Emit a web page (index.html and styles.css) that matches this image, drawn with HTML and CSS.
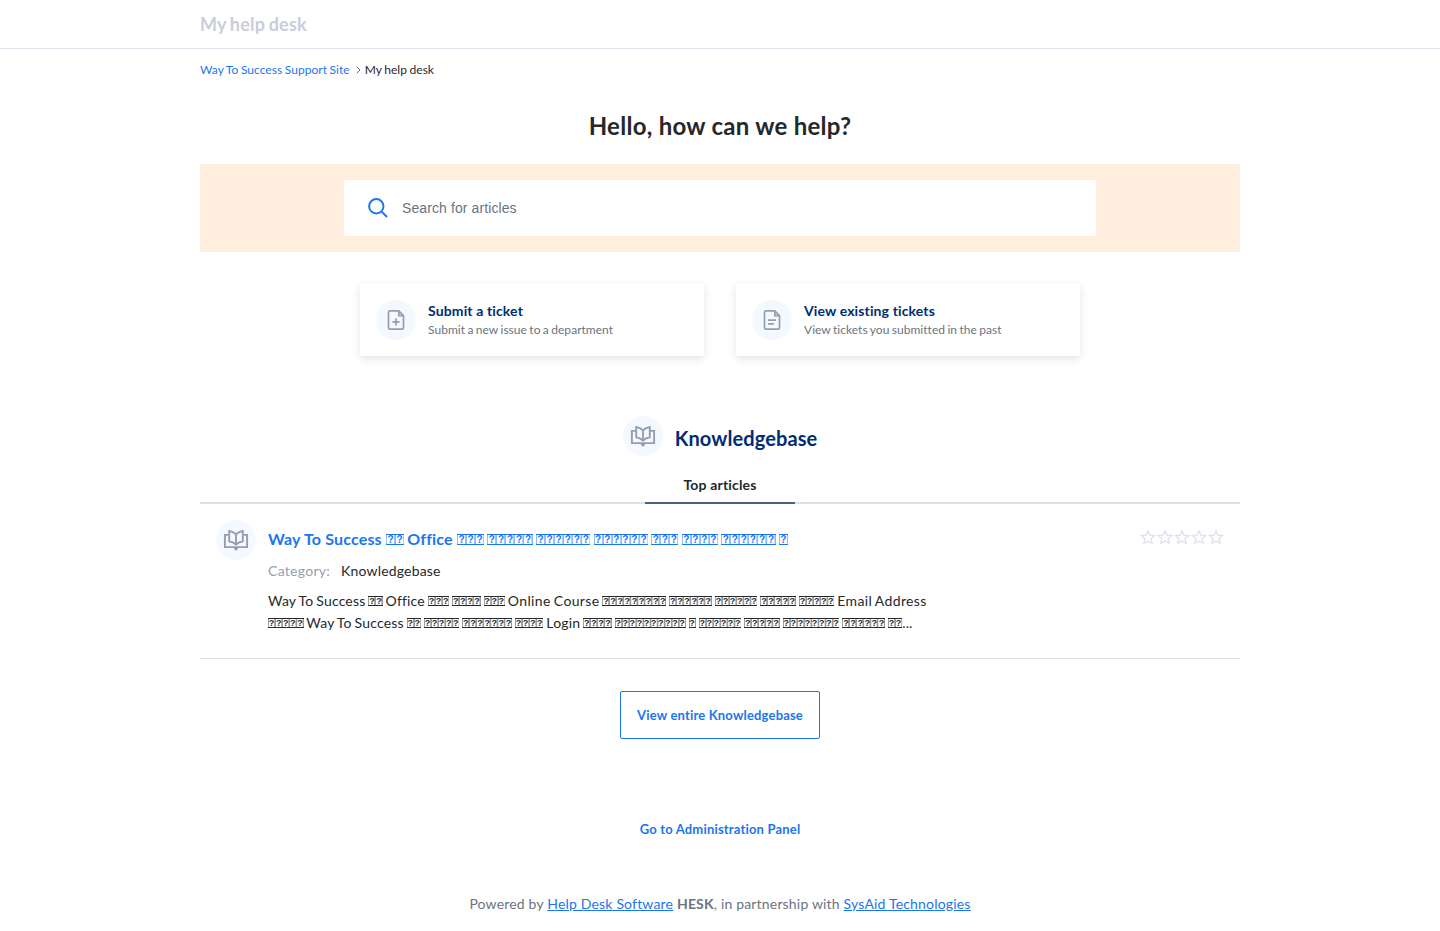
FILE: index.html
```html
<!DOCTYPE html>
<html lang="en">
<head>
<meta charset="utf-8">
<title>My help desk</title>
<link rel="stylesheet" href="styles.css">
</head>
<body>
<svg class="defs" width="0" height="0">
  <symbol id="book" viewBox="0 0 24 24"><path d="M5.200 6.900H.9v12.200h22.200V6.900h-4.300M12 16.500V6.200C10 4.500 7.600 3.400 5.200 3v10.200c2.600.4 4.900 1.500 6.800 3.300 1.900-1.800 4.200-2.900 6.800-3.300V3C16.400 3.400 14 4.500 12 6.200" fill="none" stroke="currentColor" stroke-width="1.900"/><path d="M9.800 19h4.400c0 2-1 3.400-2.200 3.400S9.800 21 9.800 19z" fill="currentColor"/></symbol>
  <symbol id="star" viewBox="0 0 16 16"><path d="M8 1.800l1.900 4.300 4.700.5-3.500 3.100 1 4.600L8 11.900l-4.100 2.400 1-4.600L1.400 6.600l4.700-.5z" fill="none" stroke="currentColor" stroke-width="1.300"/></symbol>
</svg>
<header class="header"><div class="container"><a class="brand">My help desk</a></div></header>
<main class="container">
  <nav class="crumbs"><a>Way To Success Support Site</a><svg width="5" height="8" viewBox="0 0 5 8"><path d="M.7.7 4 4 .7 7.300" fill="none" stroke="#6b7480"/></svg><span>My help desk</span></nav>
  <h1 class="hello">Hello, how can we help?</h1>
  <div class="search"><div class="search-box">
    <svg width="20" height="20" viewBox="0 0 20 20"><path d="M13.600 13.600 19 19M15.500 8.300a7.200 7.200 0 1 1-14.400 0 7.200 7.200 0 0 1 14.400 0z" fill="none" stroke="#1a76f0" stroke-width="2"/></svg>
    <input type="text" placeholder="Search for articles">
  </div></div>
  <div class="cards">
    <a class="card"><span class="disc"><svg width="24" height="24" viewBox="0 0 24 24"><path d="M14.800 2.900H5.700a1.200 1.200 0 0 0-1.200 1.200v15.800a1.200 1.200 0 0 0 1.200 1.200h12.600a1.200 1.200 0 0 0 1.200-1.200V7.700zv4.800h4.700M12 10.200v7.200M8.400 13.800h7.200" fill="none" stroke="currentColor" stroke-width="1.700"/></svg></span>
      <span class="card-text"><b>Submit a ticket</b><span>Submit a new issue to a department</span></span></a>
    <a class="card"><span class="disc"><svg width="24" height="24" viewBox="0 0 24 24"><path d="M14.800 2.900H5.700a1.200 1.200 0 0 0-1.200 1.200v15.800a1.200 1.200 0 0 0 1.200 1.200h12.600a1.200 1.200 0 0 0 1.200-1.200V7.700zv4.800h4.700M8 12.200h8M8 15.800h6" fill="none" stroke="currentColor" stroke-width="1.700"/></svg></span>
      <span class="card-text"><b>View existing tickets</b><span>View tickets you submitted in the past</span></span></a>
  </div>
  <h2 class="kb"><span class="disc"><svg width="26" height="24"><use href="#book"/></svg></span><span class="kb-name">Knowledgebase</span></h2>
  <div class="tabs"><div class="tab">Top articles</div></div>
  <article class="article">
    <span class="disc"><svg width="26" height="24"><use href="#book"/></svg></span>
    <div class="article-main">
      <h3>Way To Success <i style="--n:2">??</i> Office <i style="--n:3">???</i> <i style="--n:5">?????</i> <i style="--n:6">??????</i> <i style="--n:6">??????</i> <i style="--n:3">???</i> <i style="--n:4">????</i> <i style="--n:6">??????</i> <i style="--n:1">?</i></h3>
      <div class="category"><span>Category:</span>Knowledgebase</div>
      <p>Way To Success <i style="--n:2">??</i> Office <i style="--n:3">???</i> <i style="--n:4">????</i> <i style="--n:3">???</i> <span class="wide">Online Course</span> <i style="--n:9">?????????</i> <i style="--n:6">??????</i> <i style="--n:6">??????</i> <i style="--n:5">?????</i> <i style="--n:5">?????</i> <span class="wide">Email Address</span><br><i style="--n:5">?????</i> Way To Success <i style="--n:2">??</i> <i style="--n:5">?????</i> <i style="--n:7">???????</i> <i style="--n:4">????</i> Login <i style="--n:4">????</i> <i style="--n:10">??????????</i> <i style="--n:1">?</i> <i style="--n:6">??????</i> <i style="--n:5">?????</i> <i style="--n:8">????????</i> <i style="--n:6">??????</i> <i style="--n:2">??</i>...</p>
    </div>
    <div class="stars"><svg><use href="#star"/></svg><svg><use href="#star"/></svg><svg><use href="#star"/></svg><svg><use href="#star"/></svg><svg><use href="#star"/></svg></div>
  </article>
  <a class="button">View entire Knowledgebase</a>
  <a class="admin">Go to Administration Panel</a>
</main>
<footer class="footer">Powered by <a>Help Desk Software</a> <b>HESK</b>, in partnership with <a>SysAid Technologies</a></footer>
</body>
</html>
```
FILE: styles.css
```css
* { box-sizing: border-box; }
body { margin: 0; background: #fff; color: #26282a; font: 14px/22px Lato, sans-serif; letter-spacing: .18px; }
h1, h2, h3, p { margin: 0; }
.defs { position: absolute; }
.container { width: 1040px; margin: 0 auto; }
.header { height: 49px; border-bottom: 1px solid #dce1eb; }
.brand { display: block; font-size: 18px; line-height: 49px; font-weight: 700; color: #c9cdd9; letter-spacing: .2px; word-spacing: -1px; }
.crumbs { display: flex; align-items: center; height: 42px; font-size: 12px; letter-spacing: .03px; word-spacing: -.5px; }
.crumbs a { color: #1a76f0; }
.crumbs svg { margin: 0 4px 0 6px; }
.hello { margin-top: 18px; text-align: center; font-size: 24px; line-height: 34px; letter-spacing: .27px; }
.search { margin-top: 21px; height: 88px; padding: 16px 144px; background: #ffeedd; }
.search-box { display: flex; align-items: center; height: 56px; padding-left: 24px; background: #fff; border-radius: 2px; }
.search input { border: 0; outline: 0; width: 600px; margin-left: 14px; padding: 0; font: 14px "Liberation Sans", sans-serif; letter-spacing: .1px; }
.search input::placeholder { color: #6b7480; }
.cards { display: flex; gap: 32px; justify-content: center; margin-top: 32px; }
.card { display: flex; align-items: center; gap: 12px; width: 344px; height: 72px; padding: 16px; box-shadow: 0 3px 8px rgba(38, 40, 42, .12); border-radius: 2px; }
.disc { display: flex; flex: none; align-items: center; justify-content: center; width: 40px; height: 40px; border-radius: 50%; background: #f4f8ff; color: #959eb0; }
.card-text { padding-top: 2px; }
.card-text b { display: block; color: #002d73; line-height: 18px; letter-spacing: .13px; }
.card-text span { display: block; font-size: 12px; line-height: 20px; color: #6b7480; letter-spacing: .03px; word-spacing: -.7px; }
.kb { display: flex; justify-content: center; gap: 12px; margin-top: 60px; font-size: 20px; line-height: 44px; color: #002d73; height: 44px; letter-spacing: .1px; }
.tabs { display: flex; justify-content: center; height: 44px; border-bottom: 2px solid #dce1e8; }
.tab { width: 150px; height: 44px; padding-top: 14px; text-align: center; font-weight: 700; border-bottom: 2px solid #4b6084; }
.article { display: flex; gap: 12px; height: 155px; padding: 16px; border-bottom: 1px solid #dce1e8; }
.article-main { flex: 1; padding-top: 8px; }
.article h3 { font-size: 16px; line-height: 22px; color: #1a76f0; white-space: nowrap; }
.category { margin-top: 10px; }
.category span { margin-right: 11px; color: #959eb0; letter-spacing: .28px; }
.article p { margin-top: 8px; white-space: nowrap; word-spacing: -.8px; }
.wide { letter-spacing: .36px; }

/* Boxed question marks: one framed cell per missing character */
.article i {
  --cell: 7.1px; --side: #9a9b9c;
  display: inline-block; contain: layout; white-space: nowrap;
  width: calc(var(--n) * var(--cell)); height: 10px; margin-right: 0;
  border: solid currentColor; border-width: 1px 0;
  background: linear-gradient(90deg, var(--side) 1px, transparent 1px calc(100% - 1px), var(--side) calc(100% - 1px)) 0 0 / var(--cell) 100%;
  font: 700 9px/8px "Liberation Sans", sans-serif;
  letter-spacing: calc(var(--cell) - .611em); text-indent: .8px;
}
.article h3 i { --cell: 9.07px; --side: #8cbaf7; height: 11px; margin-right: -.85px; font-size: 10px; line-height: 9px; text-indent: 1.500px; }

.stars { display: flex; gap: 1px; padding-top: 9px; color: #dce1ed; }
.stars svg { width: 16px; height: 16px; }
.button { display: block; width: 200px; height: 48px; margin: 32px auto 0; border: 1px solid #1a76f0; border-radius: 2px; text-align: center; line-height: 46px; font-size: 13px; font-weight: 700; color: #1a76f0; }
.admin { display: block; margin-top: 79px; text-align: center; font-size: 13px; font-weight: 700; color: #1a76f0; }
.footer { margin-top: 53px; text-align: center; color: #6b7480; }
.footer a { color: #1a76f0; text-decoration: underline; }
```
